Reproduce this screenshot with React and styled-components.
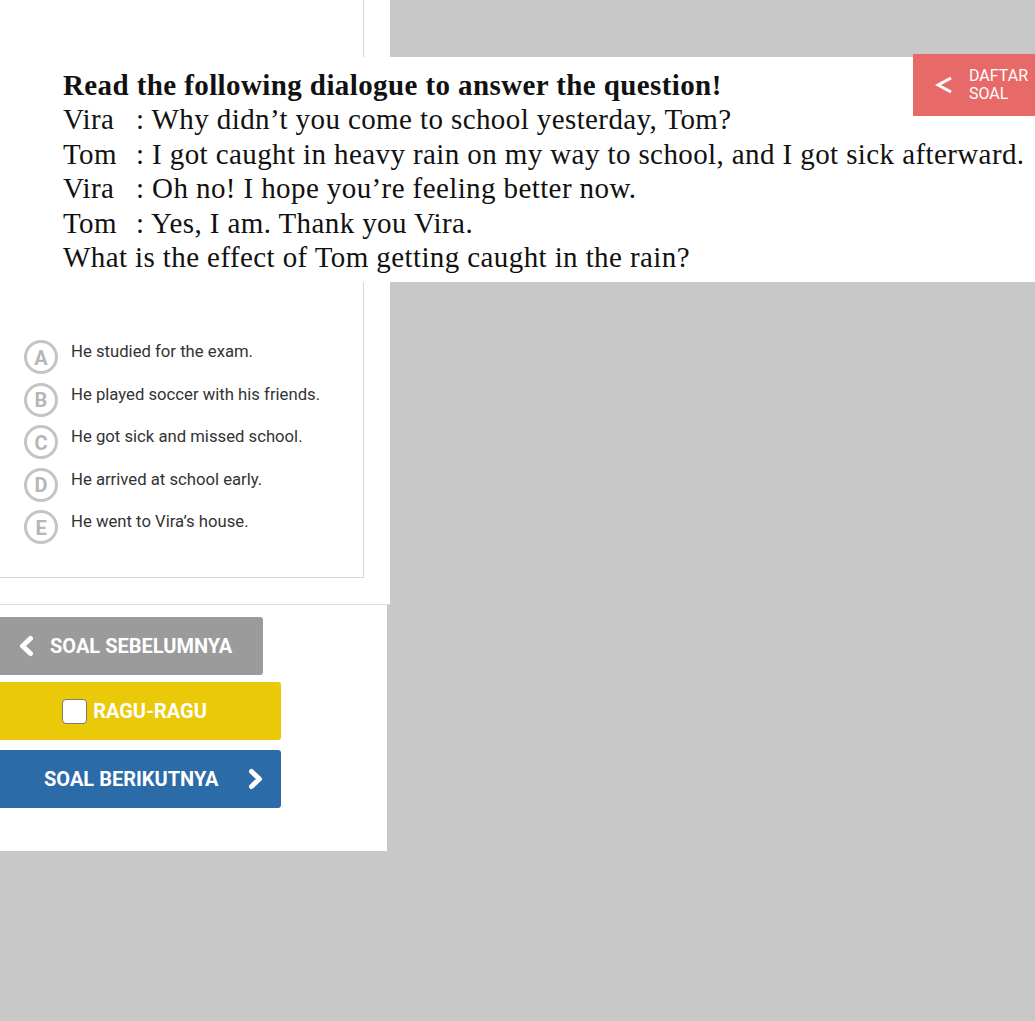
import React from "react";
import styled, { createGlobalStyle } from "styled-components";

const Global = createGlobalStyle`
  html, body {
    margin: 0;
    padding: 0;
    background: #c8c8c8;
    font-family: Roboto, "Liberation Sans", sans-serif;
  }
`;

const Page = styled.div`
  position: relative;
  width: 1035px;
  height: 1021px;
  overflow: hidden;
`;

const MainPanel = styled.div`
  width: 390px;
  height: 604px;
  background: #fff;
  border-bottom: 1px solid #dcdcdc;
`;

const QuestionCard = styled.div`
  width: 363px;
  height: 520px;
  border-right: 1px solid #d6d6d6;
  border-bottom: 1px solid #d6d6d6;
  padding-top: 57px;
`;

const QuestionImage = styled.div`
  width: 1035px;
  height: 225px;
  box-sizing: border-box;
  padding: 11px 0 0 63px;
  background: #fff;
  font-family: "Liberation Serif", "Times New Roman", serif;
  font-size: 29px;
  letter-spacing: 0.4px;
  line-height: 34.4px;
  color: #111;
  white-space: nowrap;
`;

const Heading = styled.div`
  font-weight: 700;
`;

const Line = styled.div`
  display: flex;
`;

const Speaker = styled.span`
  display: inline-block;
  width: 73px;
`;

const Options = styled.div`
  margin-top: 58px;
  padding-left: 24px;
  display: flex;
  flex-direction: column;
  gap: 8.5px;
`;

const Option = styled.div`
  display: flex;
  align-items: flex-start;
  height: 34px;
  cursor: pointer;
`;

const Circle = styled.div`
  width: 34px;
  height: 34px;
  box-sizing: border-box;
  border: 3.5px solid #c4c4c4;
  border-radius: 50%;
  display: flex;
  align-items: center;
  justify-content: center;
  color: #b6b6b6;
  font-weight: 700;
  font-size: 20px;
  line-height: 1;
  padding-top: 1px;
  flex-shrink: 0;
`;

const OptionText = styled.span`
  margin-left: 13px;
  margin-top: 2px;
  font-size: 16.7px;
  line-height: 20px;
  color: #333;
`;

const NavPanel = styled.div`
  width: 387px;
  height: 246px;
  background: #fff;
  padding-top: 12px;
  box-sizing: border-box;
  display: flex;
  flex-direction: column;
`;

const NavButton = styled.button`
  display: flex;
  align-items: center;
  justify-content: ${(p) => p.$justify || "flex-start"};
  width: ${(p) => p.$width}px;
  height: 58px;
  margin-bottom: ${(p) => p.$mb || 0}px;
  padding: 0 ${(p) => p.$pr || 0}px 0 ${(p) => p.$pl || 0}px;
  border: none;
  border-radius: 0 3px 3px 0;
  background: ${(p) => p.$bg};
  color: #fff;
  font-family: Roboto, "Liberation Sans", sans-serif;
  font-weight: 700;
  font-size: 20px;
  text-transform: uppercase;
  cursor: pointer;
  box-sizing: border-box;
`;

const Label = styled.span`
  margin-left: ${(p) => p.$ml || 0}px;
  margin-right: ${(p) => p.$mr || 0}px;
  display: flex;
  align-items: center;
`;

const Check = styled.span`
  display: inline-block;
  width: 25px;
  height: 25px;
  box-sizing: border-box;
  border: 1.5px solid #7a7a7a;
  border-radius: 4px;
  background: #fff;
  margin-right: 6px;
`;

const DaftarButton = styled.button`
  position: absolute;
  top: 54px;
  right: 0;
  width: 122px;
  height: 62px;
  border: none;
  background: #e86a68;
  color: #fff;
  display: flex;
  align-items: center;
  padding: 0 0 0 22px;
  gap: 16px;
  font-family: Roboto, "Liberation Sans", sans-serif;
  font-size: 16px;
  line-height: 18px;
  text-align: left;
  cursor: pointer;
`;

const Chevron = ({ dir }) => (
  <svg width="18" height="22" viewBox="0 0 18 22" fill="none">
    <path
      d={dir === "left" ? "M13.5 3.5 L5.5 11 L13.5 18.5" : "M4.5 3.5 L12.5 11 L4.5 18.5"}
      stroke="#fff"
      strokeWidth="5"
      strokeLinecap="round"
      strokeLinejoin="round"
    />
  </svg>
);

const options = [
  ["A", "He studied for the exam."],
  ["B", "He played soccer with his friends."],
  ["C", "He got sick and missed school."],
  ["D", "He arrived at school early."],
  ["E", "He went to Vira\u2019s house."],
];

const dialogue = [
  ["Vira", ": Why didn\u2019t you come to school yesterday, Tom?"],
  ["Tom", ": I got caught in heavy rain on my way to school, and I got sick afterward."],
  ["Vira", ": Oh no! I hope you\u2019re feeling better now."],
  ["Tom", ": Yes, I am. Thank you Vira."],
];

export default function App() {
  return (
    <>
      <Global />
      <Page>
        <MainPanel>
          <QuestionCard>
            <QuestionImage>
              <Heading>Read the following dialogue to answer the question!</Heading>
              {dialogue.map(([who, said]) => (
                <Line key={said}>
                  <Speaker>{who}</Speaker>
                  <span>{said}</span>
                </Line>
              ))}
              <div>What is the effect of Tom getting caught in the rain?</div>
            </QuestionImage>
            <Options>
              {options.map(([letter, text]) => (
                <Option key={letter}>
                  <Circle>{letter}</Circle>
                  <OptionText>{text}</OptionText>
                </Option>
              ))}
            </Options>
          </QuestionCard>
        </MainPanel>
        <NavPanel>
          <NavButton $width={263} $bg="#9b9b9b" $pl={17} $mb={7}>
            <Chevron dir="left" />
            <Label $ml={15}>Soal Sebelumnya</Label>
          </NavButton>
          <NavButton $width={281} $bg="#e9c908" $justify="center" $pr={12} $mb={10}>
            <Check />
            <Label>Ragu-Ragu</Label>
          </NavButton>
          <NavButton $width={281} $bg="#2b6ba8" $pl={44}>
            <Label $mr={29}>Soal Berikutnya</Label>
            <Chevron dir="right" />
          </NavButton>
        </NavPanel>
        <DaftarButton>
          <svg width="18" height="20" viewBox="0 0 18 20" fill="none">
            <path d="M16 3 L3 10 L16 17" stroke="#fff" strokeWidth="3" strokeLinejoin="miter" />
          </svg>
          <span>
            DAFTAR
            <br />
            SOAL
          </span>
        </DaftarButton>
      </Page>
    </>
  );
}
